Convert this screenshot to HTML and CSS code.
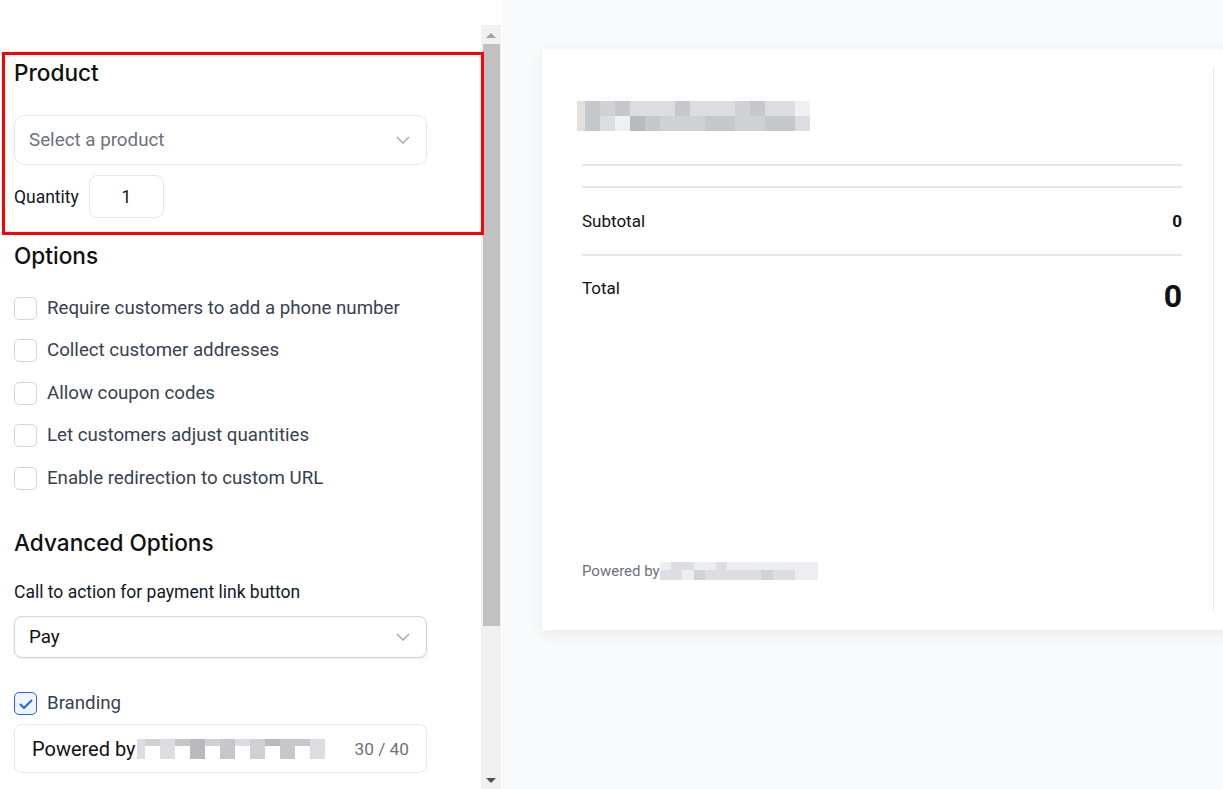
FILE: index.html
```html
<!DOCTYPE html>
<html lang="en">
<head>
    <meta charset="UTF-8">
    <meta name="viewport" content="width=device-width, initial-scale=1.0">
    <title>Payment Link</title>
    <link rel="stylesheet" href="styles.css">
</head>
<body>
    <div class="editor">
        <div class="editor-content">
            <h2 class="section-title">Product</h2>
            <div class="select select-lg">
                <span class="placeholder">Select a product</span>
                <svg class="chevron" width="14" height="8" viewBox="0 0 14 8"><polyline points="1,1 7,7 13,1" fill="none" stroke="#9ca3af" stroke-width="1.3"/></svg>
            </div>
            <div class="quantity-row">
                <label>Quantity</label>
                <div class="qty-input">1</div>
            </div>

            <h2 class="section-title options-title">Options</h2>
            <ul class="option-list">
                <li><span class="checkbox"></span>Require customers to add a phone number</li>
                <li><span class="checkbox"></span>Collect customer addresses</li>
                <li><span class="checkbox"></span>Allow coupon codes</li>
                <li><span class="checkbox"></span>Let customers adjust quantities</li>
                <li><span class="checkbox"></span>Enable redirection to custom URL</li>
            </ul>

            <h2 class="section-title advanced-title">Advanced Options</h2>
            <label class="field-label">Call to action for payment link button</label>
            <div class="select select-sm">
                <span class="value">Pay</span>
                <svg class="chevron" width="14" height="8" viewBox="0 0 14 8"><polyline points="1,1 7,7 13,1" fill="none" stroke="#9ca3af" stroke-width="1.3"/></svg>
            </div>

            <div class="branding-row">
                <span class="checkbox checked">
                    <svg width="16" height="16" viewBox="0 0 16 16"><polyline points="2.5,8.5 6,12 13.5,4.5" fill="none" stroke="#2563eb" stroke-width="2" stroke-linecap="round" stroke-linejoin="round"/></svg>
                </span>
                Branding
            </div>
            <div class="branding-input">
                <span class="powered">Powered by</span>
                <span class="blur blur-input">
                    <span class="b1"></span><span class="b2"></span><span class="b1"></span><span class="b3"></span><span class="b4"></span><span class="b2"></span><span class="b3"></span><span class="b1"></span><span class="b2"></span><span class="b4"></span><span class="b3"></span><span class="b3"></span><span class="b1"></span>
                </span>
                <span class="counter">30 / 40</span>
            </div>
        </div>
        <div class="scrollbar">
            <span class="arrow up"></span>
            <span class="thumb"></span>
            <span class="arrow down"></span>
        </div>
        <div class="highlight"></div>
    </div>

    <div class="preview">
        <div class="card">
            <div class="card-body">
                <div class="blur blur-logo">
                    <span class="n1"></span><span class="b3"></span><span class="b2"></span><span class="b3"></span><span class="b1"></span><span class="b1"></span><span class="b1"></span><span class="b3"></span><span class="b1"></span><span class="b1"></span><span class="b1"></span><span class="b2"></span><span class="b3"></span><span class="b1"></span><span class="b1"></span><span class="b0"></span>
                    <span class="n1"></span><span class="b3"></span><span class="b1"></span><span class="b0"></span><span class="b4"></span><span class="b3"></span><span class="b2"></span><span class="b2"></span><span class="b2"></span><span class="b3"></span><span class="b3"></span><span class="b2"></span><span class="b2"></span><span class="b3"></span><span class="b3"></span><span class="b1"></span>
                </div>
                <div class="divider"></div>
                <div class="divider items-gap"></div>
                <div class="summary-row subtotal">
                    <span>Subtotal</span>
                    <strong>0</strong>
                </div>
                <div class="divider"></div>
                <div class="summary-row total">
                    <span>Total</span>
                    <strong>0</strong>
                </div>
                <div class="card-footer">
                    <span>Powered by</span>
                    <span class="blur blur-footer">
                        <span class="c0"></span><span class="c1"></span><span class="c1"></span><span class="c0"></span><span class="c0"></span><span class="c1"></span><span class="c0"></span><span class="c0"></span><span class="c0"></span><span class="c0"></span><span class="c0"></span><span class="c0"></span><span class="c0"></span><span class="c0"></span>
                        <span class="c1"></span><span class="c1"></span><span class="c0"></span><span class="c2"></span><span class="c1"></span><span class="c1"></span><span class="c1"></span><span class="c1"></span><span class="c1"></span><span class="c2"></span><span class="c1"></span><span class="c1"></span><span class="c0"></span><span class="c0"></span>
                    </span>
                </div>
            </div>
            <div class="card-rule"></div>
        </div>
    </div>
</body>
</html>
```

FILE: styles.css
```css
body {
    font-family: Roboto, "Liberation Sans", sans-serif;
    margin: 0;
    padding: 0;
    display: flex;
    height: 100vh;
    overflow: hidden;
    background-color: #f9fafb;
    color: #111827;
}

.editor {
    position: relative;
    display: flex;
    width: 502px;
    flex-shrink: 0;
    background-color: white;
}

.editor-content {
    width: 467px;
    padding: 59px 0 0 14px;
}

.section-title {
    margin: 0;
    font-family: Inter, Roboto, sans-serif;
    font-size: 22.6px;
    font-weight: 500;
    line-height: 28px;
    color: #111;
}

.select {
    display: flex;
    align-items: center;
    justify-content: space-between;
    box-sizing: border-box;
    width: 413px;
    padding: 0 15px 0 14px;
    background-color: white;
}

.select-lg {
    height: 50px;
    margin-top: 28px;
    border: 1px solid #e5e7eb;
    border-radius: 10px;
}

.select-sm {
    height: 42px;
    margin-top: 13px;
    border: 1px solid #d1d5db;
    border-radius: 8px;
    box-shadow: 0 1px 3px rgba(0, 0, 0, 0.08);
}

.placeholder {
    font-size: 18.8px;
    color: #6b7280;
}

.select .value {
    font-size: 18.8px;
    color: #111;
}

.chevron {
    margin-right: 1px;
}

.quantity-row {
    display: flex;
    align-items: center;
    gap: 10px;
    margin-top: 10px;
}

.quantity-row label {
    font-size: 17.5px;
}

.qty-input {
    width: 73px;
    height: 41px;
    border: 1px solid #e5e7eb;
    border-radius: 8px;
    display: flex;
    align-items: center;
    justify-content: center;
    font-size: 18px;
}

.options-title {
    margin-top: 24px;
}

.option-list {
    list-style: none;
    margin: 24.5px 0 0;
    padding: 0;
    display: flex;
    flex-direction: column;
    gap: 15.5px;
}

.option-list li,
.branding-row {
    display: flex;
    align-items: center;
    gap: 10px;
    font-size: 18.7px;
    line-height: 27px;
    color: #374151;
}

.checkbox {
    display: flex;
    align-items: center;
    justify-content: center;
    box-sizing: border-box;
    width: 23px;
    height: 23px;
    border: 1px solid #d1d5db;
    border-radius: 5px;
    flex-shrink: 0;
}

.checkbox.checked {
    border: 1.5px solid #2563eb;
    background-color: #eff4ff;
}

.advanced-title {
    margin-top: 37.5px;
}

.field-label {
    display: block;
    margin-top: 24px;
    font-size: 17.5px;
    line-height: 22px;
}

.branding-row {
    margin-top: 32px;
}

.branding-input {
    display: flex;
    align-items: center;
    box-sizing: border-box;
    width: 413px;
    height: 49px;
    margin-top: 7px;
    padding: 0 17px 0 17px;
    border: 1px solid #e5e7eb;
    border-radius: 8px;
}

.powered {
    font-size: 20px;
    color: #111;
}

.counter {
    margin-left: auto;
    font-size: 17.3px;
    color: #6b7280;
}

/* pixelated placeholders for the redacted brand name */
.blur {
    display: grid;
}

.blur span {
    display: block;
}

.blur-input {
    grid-template-columns: 8px repeat(12, 15px);
    grid-template-rows: 7px 13px;
    margin-left: 1px;
}

.blur-input span:nth-child(odd) {
    grid-row: span 2;
}

.blur-logo {
    grid-template-columns: 8px repeat(15, 15px);
    grid-template-rows: 15px 15px;
    width: 233px;
    margin-left: -5px;
}

.blur-footer {
    grid-template-columns: repeat(14, 11.3px);
    grid-template-rows: 8px 10px;
}

.b0 { background-color: #eef0f2; }
.b1 { background-color: #dcdde0; }
.b2 { background-color: #cfd1d5; }
.b3 { background-color: #c6c7cb; }
.b4 { background-color: #b9babf; }
.n1 { background-color: #e4e0dc; }
.c0 { background-color: #eceef1; }
.c1 { background-color: #dcdee2; }
.c2 { background-color: #cfd3d8; }

.scrollbar {
    display: flex;
    flex-direction: column;
    align-items: center;
    width: 20px;
    margin-top: 25px;
    background-color: #f1f1f1;
}

.arrow {
    width: 0;
    height: 0;
    border-left: 5px solid transparent;
    border-right: 5px solid transparent;
}

.arrow.up {
    margin: 8px 0 6px;
    border-bottom: 5px solid #a3a3a3;
}

.arrow.down {
    margin: auto 0 6px;
    border-top: 5px solid #505050;
}

.thumb {
    width: 17px;
    height: 582px;
    background-color: #c1c1c1;
}

.highlight {
    position: absolute;
    left: 2px;
    top: 52px;
    width: 476px;
    height: 177px;
    border: 3px solid #ff0000;
}

.preview {
    flex: 1;
    padding: 49px 0 0 40px;
    min-width: 0;
}

.card {
    display: flex;
    width: 760px;
    height: 581px;
    background-color: white;
    box-shadow: 0 4px 14px rgba(0, 0, 0, 0.07);
}

.card-body {
    display: flex;
    flex-direction: column;
    width: 600px;
    padding: 52px 0 0 40px;
}

.divider {
    height: 2px;
    background-color: #e5e7eb;
    margin-top: 33px;
}

.divider.items-gap {
    margin-top: 20px;
}

.summary-row {
    display: flex;
    justify-content: space-between;
    font-size: 17px;
    color: #111;
}

.subtotal {
    align-items: center;
    height: 66px;
}

.summary-row + .divider {
    margin-top: 0;
}

.total {
    align-items: flex-start;
    padding-top: 20px;
    line-height: 24px;
}

.total strong {
    font-size: 32px;
    line-height: 40px;
}

.card-footer {
    display: flex;
    align-items: center;
    margin-top: auto;
    margin-bottom: 49px;
    font-size: 15px;
    line-height: 20px;
    color: #6b7280;
}

.card-rule {
    width: 1px;
    margin: 19px 0 20px 31px;
    background-color: #e5e7eb;
}
```
